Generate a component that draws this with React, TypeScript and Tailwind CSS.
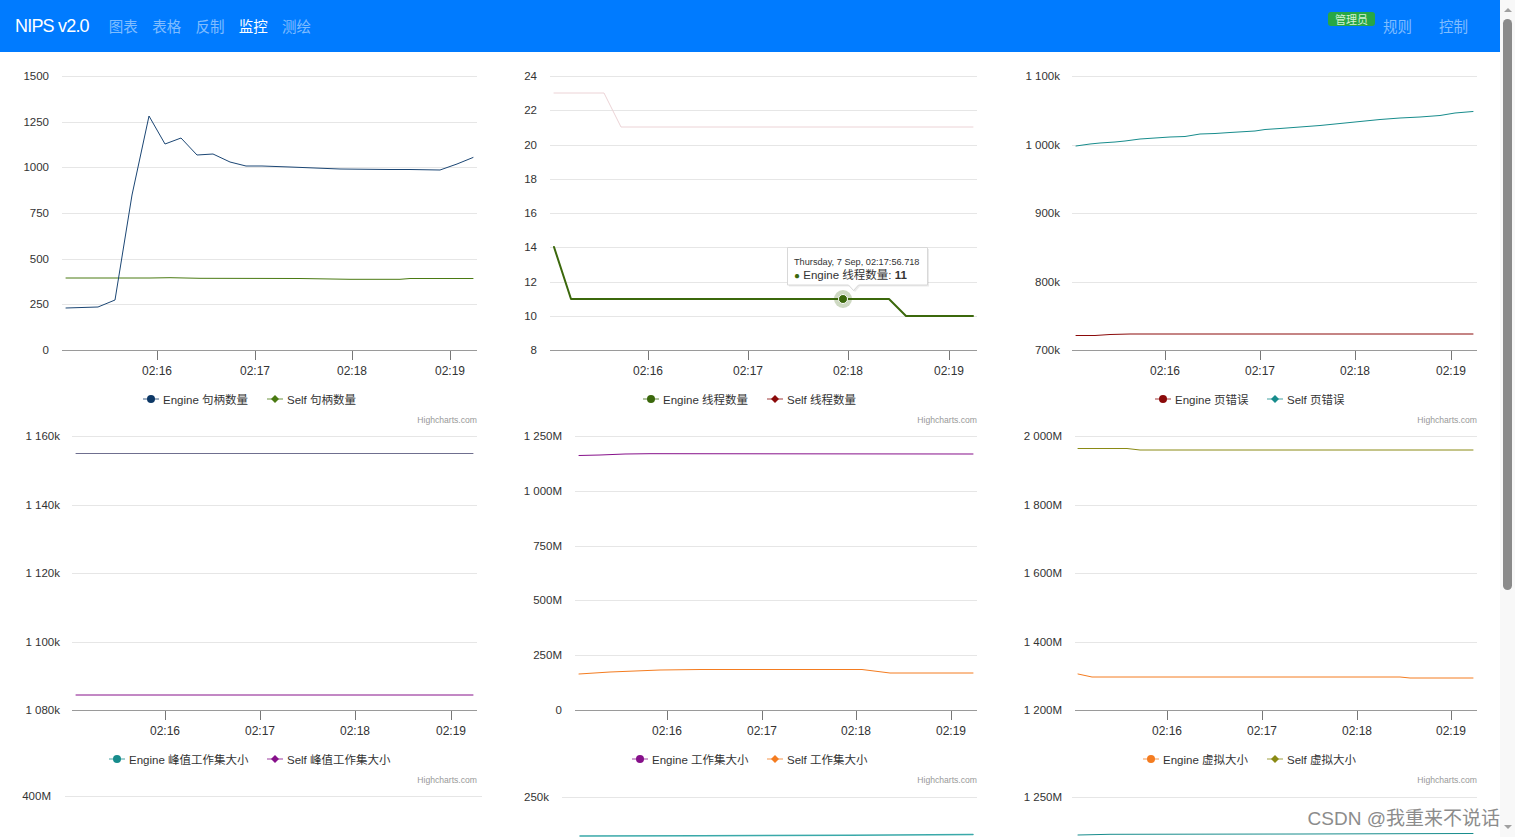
import React from "react";

const HC_FONT = '"Liberation Sans", "Noto Sans CJK SC", Arial, sans-serif';

type Pt = [number, number];
interface Series {
  color: string;
  width?: number;
  pts: Pt[];
}
interface LegendItem {
  x: number;
  text: string;
  color: string;
  symbol: "circle" | "diamond";
}
interface ChartDef {
  col: number;
  row: number;
  yLabels: { t: string; y: number }[];
  labelRight: number;
  plotLeft: number;
  plotRight: number;
  axisY?: number;
  xTicks?: { t: string; x: number }[];
  series: Series[];
  legend?: LegendItem[];
  legendY?: number;
  creditsY?: number;
  extra?: React.ReactNode;
}

const C = {
  navy: "#1b4674",
  navyMk: "#0d3866",
  green: "#4a7a12",
  dgreen: "#3b680c",
  dred: "#8b0a0a",
  teal: "#178c8c",
  purple: "#86108a",
  orange: "#f47c20",
  olive: "#8a8a14",
};

const charts: ChartDef[] = [
  {
    col: 0,
    row: 0,
    yLabels: [
      { t: "1500", y: 76 },
      { t: "1250", y: 121.7 },
      { t: "1000", y: 167.3 },
      { t: "750", y: 213 },
      { t: "500", y: 258.7 },
      { t: "250", y: 304.3 },
      { t: "0", y: 350 },
    ],
    labelRight: 49,
    plotLeft: 62,
    plotRight: 477,
    axisY: 350,
    xTicks: [
      { t: "02:16", x: 157 },
      { t: "02:17", x: 255 },
      { t: "02:18", x: 352 },
      { t: "02:19", x: 450 },
    ],
    series: [
      {
        color: C.green,
        pts: [
          [66, 278],
          [150, 278],
          [170, 277.7],
          [200, 278.3],
          [300, 278.5],
          [350, 279.3],
          [400, 279.3],
          [410, 278.5],
          [473, 278.5],
        ],
      },
      {
        color: C.navy,
        pts: [
          [66, 308],
          [98, 307],
          [115, 300],
          [132, 195],
          [149, 116],
          [165, 144],
          [181, 138],
          [197, 155],
          [213, 154],
          [230, 162],
          [246, 166],
          [262, 166],
          [290, 167],
          [340, 169],
          [390, 169.5],
          [410, 169.5],
          [440, 170],
          [457, 164],
          [473, 157.5],
        ],
      },
    ],
    legend: [
      { x: 143, text: "Engine 句柄数量", color: C.navyMk, symbol: "circle" },
      { x: 267, text: "Self 句柄数量", color: C.green, symbol: "diamond" },
    ],
    legendY: 399,
    creditsY: 420,
  },
  {
    col: 1,
    row: 0,
    yLabels: [
      { t: "24", y: 76 },
      { t: "22", y: 110.25 },
      { t: "20", y: 144.5 },
      { t: "18", y: 178.75 },
      { t: "16", y: 213 },
      { t: "14", y: 247.25 },
      { t: "12", y: 281.5 },
      { t: "10", y: 315.75 },
      { t: "8", y: 350 },
    ],
    labelRight: 537,
    plotLeft: 550,
    plotRight: 977,
    axisY: 350,
    xTicks: [
      { t: "02:16", x: 648 },
      { t: "02:17", x: 748 },
      { t: "02:18", x: 848 },
      { t: "02:19", x: 949 },
    ],
    series: [
      {
        color: "#ecd3d6",
        pts: [
          [554, 93],
          [604, 93],
          [621, 127],
          [973, 127],
        ],
      },
      {
        color: C.dgreen,
        width: 2,
        pts: [
          [554, 247],
          [571, 299],
          [889, 299],
          [906, 316],
          [973, 316],
        ],
      },
    ],
    legend: [
      { x: 643, text: "Engine 线程数量", color: C.dgreen, symbol: "circle" },
      { x: 767, text: "Self 线程数量", color: C.dred, symbol: "diamond" },
    ],
    legendY: 399,
    creditsY: 420,
    extra: (
      <g>
        <circle cx={843} cy={299} r={9} fill={C.dgreen} opacity={0.25} />
        <circle cx={843} cy={299} r={4.5} fill={C.dgreen} stroke="#ffffff" strokeWidth={1} />
        <path
          d="M787.5,247.5 h140 v37.5 h-69 l-5,5.5 l-5,-5.5 h-61 z"
          fill="#000000"
          opacity={0.08}
          transform="translate(1.5,1.5)"
        />
        <path
          d="M787.5,247.5 h140 v37.5 h-69 l-5,5.5 l-5,-5.5 h-61 z"
          fill="#ffffff"
          stroke="#d8d8d8"
          strokeWidth={1}
        />
        <text x={794} y={264.5} fontSize={9.2} fill="#333333" style={{ fontFamily: HC_FONT }}>
          Thursday, 7 Sep, 02:17:56.718
        </text>
        <text x={794} y={279} fontSize={11.5} fill="#333333" style={{ fontFamily: HC_FONT }}>
          <tspan fill={C.dgreen} fontSize={10}>
            ●
          </tspan>
          <tspan> Engine 线程数量: </tspan>
          <tspan fontWeight="bold">11</tspan>
        </text>
      </g>
    ),
  },
  {
    col: 2,
    row: 0,
    yLabels: [
      { t: "1 100k", y: 76 },
      { t: "1 000k", y: 144.5 },
      { t: "900k", y: 213 },
      { t: "800k", y: 281.5 },
      { t: "700k", y: 350 },
    ],
    labelRight: 1060,
    plotLeft: 1072,
    plotRight: 1477,
    axisY: 350,
    xTicks: [
      { t: "02:16", x: 1165 },
      { t: "02:17", x: 1260 },
      { t: "02:18", x: 1355 },
      { t: "02:19", x: 1451 },
    ],
    series: [
      {
        color: C.dred,
        pts: [
          [1076, 335.5],
          [1095, 335.5],
          [1110, 334.5],
          [1130, 334],
          [1473, 334],
        ],
      },
      {
        color: C.teal,
        pts: [
          [1076, 146],
          [1090, 144],
          [1100, 143],
          [1115, 142],
          [1125, 141],
          [1140, 139],
          [1155, 138],
          [1170, 137],
          [1185, 136.5],
          [1200, 134],
          [1215, 133.5],
          [1230, 132.5],
          [1255, 131],
          [1265, 129.5],
          [1280, 128.5],
          [1300, 127],
          [1320, 125.5],
          [1340, 123.5],
          [1360, 121.5],
          [1380, 119.5],
          [1400, 118],
          [1420, 117],
          [1440, 115.5],
          [1455, 113],
          [1473, 111.5],
        ],
      },
    ],
    legend: [
      { x: 1155, text: "Engine 页错误", color: C.dred, symbol: "circle" },
      { x: 1267, text: "Self 页错误", color: C.teal, symbol: "diamond" },
    ],
    legendY: 399,
    creditsY: 420,
  },
  {
    col: 0,
    row: 1,
    yLabels: [
      { t: "1 160k", y: 436 },
      { t: "1 140k", y: 504.5 },
      { t: "1 120k", y: 573 },
      { t: "1 100k", y: 641.5 },
      { t: "1 080k", y: 710 },
    ],
    labelRight: 60,
    plotLeft: 72,
    plotRight: 477,
    axisY: 710,
    xTicks: [
      { t: "02:16", x: 165 },
      { t: "02:17", x: 260 },
      { t: "02:18", x: 355 },
      { t: "02:19", x: 451 },
    ],
    series: [
      {
        color: "#6f6f8f",
        pts: [
          [76, 453.5],
          [473, 453.5],
        ],
      },
      {
        color: C.purple,
        pts: [
          [76, 695],
          [473, 695],
        ],
      },
    ],
    legend: [
      { x: 109, text: "Engine 峰值工作集大小", color: C.teal, symbol: "circle" },
      { x: 267, text: "Self 峰值工作集大小", color: C.purple, symbol: "diamond" },
    ],
    legendY: 759,
    creditsY: 780,
  },
  {
    col: 1,
    row: 1,
    yLabels: [
      { t: "1 250M", y: 436 },
      { t: "1 000M", y: 490.8 },
      { t: "750M", y: 545.6 },
      { t: "500M", y: 600.4 },
      { t: "250M", y: 655.2 },
      { t: "0", y: 710 },
    ],
    labelRight: 562,
    plotLeft: 575,
    plotRight: 977,
    axisY: 710,
    xTicks: [
      { t: "02:16", x: 667 },
      { t: "02:17", x: 762 },
      { t: "02:18", x: 856 },
      { t: "02:19", x: 951 },
    ],
    series: [
      {
        color: C.purple,
        pts: [
          [579, 455.5],
          [600, 455],
          [625, 454],
          [650, 453.7],
          [973, 454],
        ],
      },
      {
        color: C.orange,
        pts: [
          [579, 674],
          [610, 672],
          [660, 670],
          [700, 669.5],
          [862, 669.5],
          [890, 673],
          [973, 673],
        ],
      },
    ],
    legend: [
      { x: 632, text: "Engine 工作集大小", color: C.purple, symbol: "circle" },
      { x: 767, text: "Self 工作集大小", color: C.orange, symbol: "diamond" },
    ],
    legendY: 759,
    creditsY: 780,
  },
  {
    col: 2,
    row: 1,
    yLabels: [
      { t: "2 000M", y: 436 },
      { t: "1 800M", y: 504.5 },
      { t: "1 600M", y: 573 },
      { t: "1 400M", y: 641.5 },
      { t: "1 200M", y: 710 },
    ],
    labelRight: 1062,
    plotLeft: 1075,
    plotRight: 1477,
    axisY: 710,
    xTicks: [
      { t: "02:16", x: 1167 },
      { t: "02:17", x: 1262 },
      { t: "02:18", x: 1357 },
      { t: "02:19", x: 1451 },
    ],
    series: [
      {
        color: C.olive,
        pts: [
          [1078, 448.5],
          [1127, 448.5],
          [1140, 450],
          [1473, 450],
        ],
      },
      {
        color: C.orange,
        pts: [
          [1078, 674],
          [1092, 677],
          [1400, 677],
          [1410, 678],
          [1473, 678],
        ],
      },
    ],
    legend: [
      { x: 1143, text: "Engine 虚拟大小", color: C.orange, symbol: "circle" },
      { x: 1267, text: "Self 虚拟大小", color: C.olive, symbol: "diamond" },
    ],
    legendY: 759,
    creditsY: 780,
  },
  {
    col: 0,
    row: 2,
    yLabels: [{ t: "400M", y: 796 }],
    labelRight: 51,
    plotLeft: 65,
    plotRight: 482,
    series: [],
  },
  {
    col: 1,
    row: 2,
    yLabels: [{ t: "250k", y: 796.5 }],
    labelRight: 549,
    plotLeft: 562,
    plotRight: 977,
    series: [
      {
        color: "#3aa9a9",
        width: 1.5,
        pts: [
          [580, 836],
          [700, 835.8],
          [850, 835.3],
          [973, 834.5],
        ],
      },
    ],
  },
  {
    col: 2,
    row: 2,
    yLabels: [{ t: "1 250M", y: 796.5 }],
    labelRight: 1062,
    plotLeft: 1072,
    plotRight: 1477,
    series: [
      {
        color: C.teal,
        pts: [
          [1078, 835],
          [1110, 834.3],
          [1300, 834],
          [1473, 833.5],
        ],
      },
    ],
  },
];

function LegendSymbol({ item, y }: { item: LegendItem; y: number }) {
  const cx = item.x + 8;
  return (
    <g>
      <line x1={item.x} y1={y} x2={item.x + 16} y2={y} stroke={item.color} strokeWidth={1} opacity={0.8} />
      {item.symbol === "circle" ? (
        <circle cx={cx} cy={y} r={4} fill={item.color} />
      ) : (
        <path d={`M${cx},${y - 4} L${cx + 4},${y} L${cx},${y + 4} L${cx - 4},${y} Z`} fill={item.color} />
      )}
    </g>
  );
}

function Chart({ def }: { def: ChartDef }) {
  const vx = def.col * 500;
  const vy = 60 + def.row * 360;
  return (
    <svg
      width={500}
      height={360}
      viewBox={`${vx} ${vy} 500 360`}
      className="block overflow-visible"
      style={{ fontFamily: HC_FONT }}
    >
      {def.yLabels.map((l) => (
        <g key={l.t}>
          <line
            x1={def.plotLeft}
            x2={def.plotRight}
            y1={Math.round(l.y) + 0.5}
            y2={Math.round(l.y) + 0.5}
            stroke="#e6e6e6"
            strokeWidth={1}
          />
          <text x={def.labelRight} y={l.y + 4} textAnchor="end" fontSize={11.5} fill="#333333">
            {l.t}
          </text>
        </g>
      ))}
      {def.axisY !== undefined && (
        <g>
          <line
            x1={def.plotLeft}
            x2={def.plotRight}
            y1={def.axisY + 0.5}
            y2={def.axisY + 0.5}
            stroke="#9a9a9a"
            strokeWidth={1}
          />
          {def.xTicks?.map((t) => (
            <g key={t.t}>
              <line
                x1={t.x + 0.5}
                x2={t.x + 0.5}
                y1={def.axisY! + 1}
                y2={def.axisY! + 10}
                stroke="#777777"
                strokeWidth={1}
              />
              <text x={t.x} y={def.axisY! + 25} textAnchor="middle" fontSize={12} fill="#333333">
                {t.t}
              </text>
            </g>
          ))}
        </g>
      )}
      {def.series.map((s, i) => (
        <polyline
          key={i}
          points={s.pts.map((p) => p.join(",")).join(" ")}
          fill="none"
          stroke={s.color}
          strokeWidth={s.width ?? 1}
          strokeLinejoin="round"
          strokeLinecap="round"
        />
      ))}
      {def.extra}
      {def.legend?.map((item) => (
        <g key={item.text}>
          <LegendSymbol item={item} y={def.legendY!} />
          <text x={item.x + 20} y={def.legendY! + 4.5} fontSize={11.5} fill="#333333">
            {item.text}
          </text>
        </g>
      ))}
      {def.creditsY !== undefined && (
        <text x={def.plotRight} y={def.creditsY + 3} textAnchor="end" fontSize={8.6} fill="#999999">
          Highcharts.com
        </text>
      )}
    </svg>
  );
}

export default function App() {
  return (
    <div className="relative flex h-[837px] w-[1515px] overflow-hidden bg-white">
      <div className="flex w-[1500px] flex-col">
        <nav className="flex h-[52px] shrink-0 items-center bg-[#007bff] pl-[15px] pr-[32px]">
          <span className="font-['Liberation_Sans',sans-serif] text-[18px] tracking-[-0.8px] text-white">
            NIPS v2.0
          </span>
          <div className="ml-[20px] flex gap-[14.3px] font-['Noto_Sans_CJK_SC',sans-serif] text-[14.5px]">
            <span className="text-white/50">图表</span>
            <span className="text-white/50">表格</span>
            <span className="text-white/50">反制</span>
            <span className="text-white">监控</span>
            <span className="text-white/50">测绘</span>
          </div>
          <div className="ml-auto flex h-full items-center font-['Noto_Sans_CJK_SC',sans-serif]">
            <span className="mb-[14px] flex h-[14px] items-center rounded-[3px] bg-[#28a745] px-[7px] text-[11px] leading-[14px] text-[#d4f2d4]">
              管理员
            </span>
            <span className="ml-[8px] text-[14.5px] text-white/50">规则</span>
            <span className="ml-[27px] text-[14.5px] text-white/50">控制</span>
          </div>
        </nav>
        <div className="grid grid-cols-[500px_500px_500px] pt-[8px]">
          {charts.map((c, i) => (
            <Chart key={i} def={c} />
          ))}
        </div>
      </div>
      <div className="relative flex w-[15px] flex-col items-center bg-[#f8f8f8]">
        <div className="mt-[8px] h-0 w-0 border-x-[4px] border-b-[4px] border-x-transparent border-b-[#a0a0a0]" />
        <div className="mt-[7px] h-[571px] w-[9px] rounded-[5px] bg-[#8a8a8a]" />
        <div className="mt-auto mb-[8px] h-0 w-0 border-x-[4px] border-t-[4px] border-x-transparent border-t-[#a0a0a0]" />
      </div>
      <div className="absolute right-[15px] bottom-[7px] font-['Liberation_Sans','Noto_Sans_CJK_SC',sans-serif] text-[19px] leading-[22px] text-[#8c8c8c] [text-shadow:0_0_2px_#ffffff]">
        CSDN @我重来不说话
      </div>
    </div>
  );
}
